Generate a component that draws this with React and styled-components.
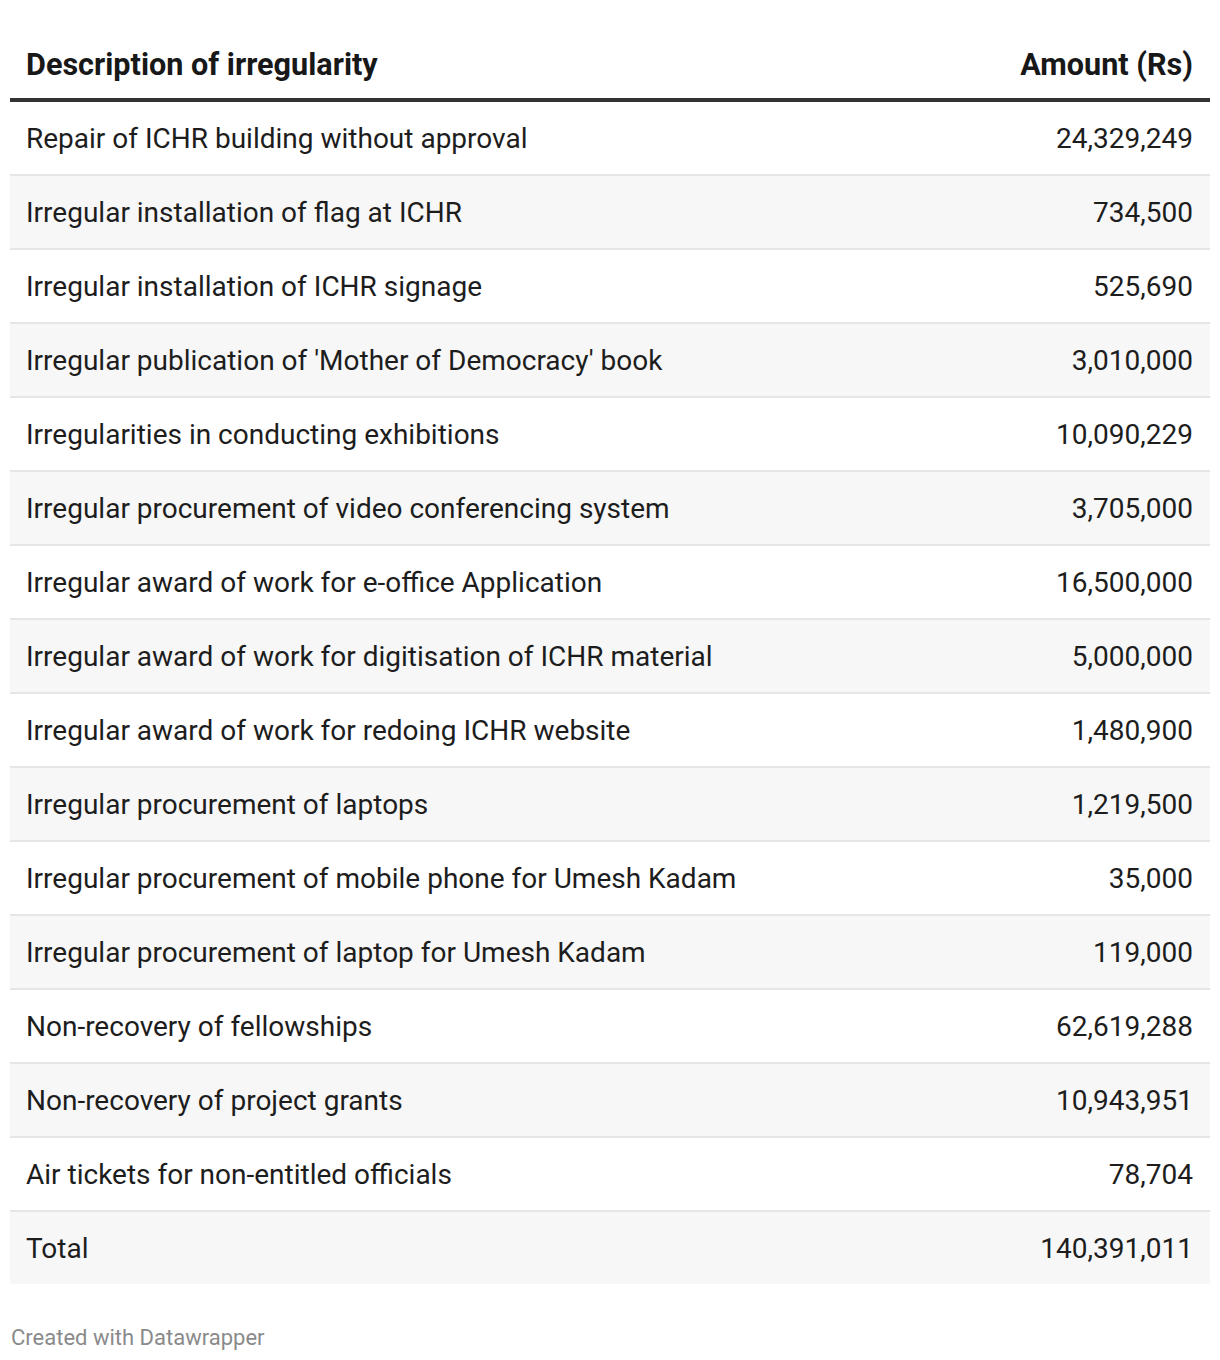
import React from "react";
import styled, { createGlobalStyle } from "styled-components";

const ROWS = [
  ["Repair of ICHR building without approval", "24,329,249"],
  ["Irregular installation of flag at ICHR", "734,500"],
  ["Irregular installation of ICHR signage", "525,690"],
  ["Irregular publication of 'Mother of Democracy' book", "3,010,000"],
  ["Irregularities in conducting exhibitions", "10,090,229"],
  ["Irregular procurement of video conferencing system", "3,705,000"],
  ["Irregular award of work for e-office Application", "16,500,000"],
  ["Irregular award of work for digitisation of ICHR material", "5,000,000"],
  ["Irregular award of work for redoing ICHR website", "1,480,900"],
  ["Irregular procurement of laptops", "1,219,500"],
  ["Irregular procurement of mobile phone for Umesh Kadam", "35,000"],
  ["Irregular procurement of laptop for Umesh Kadam", "119,000"],
  ["Non-recovery of fellowships", "62,619,288"],
  ["Non-recovery of project grants", "10,943,951"],
  ["Air tickets for non-entitled officials", "78,704"],
  ["Total", "140,391,011"],
];

function App() {
  return (
    <>
      <GlobalStyle />
      <Page>
        <Table>
          <thead>
            <tr>
              <HeadCell>Description of irregularity</HeadCell>
              <HeadCell align="right">Amount (Rs)</HeadCell>
            </tr>
          </thead>
          <tbody>
            {ROWS.map(([desc, amount], idx) => (
              <Row key={desc} $striped={idx % 2 === 1}>
                <Cell>{desc}</Cell>
                <Cell align="right">{amount}</Cell>
              </Row>
            ))}
          </tbody>
        </Table>
        <Footer>Created with Datawrapper</Footer>
      </Page>
    </>
  );
}

export default App;

//style
const GlobalStyle = createGlobalStyle`
  body {
    margin: 0;
    background: #fff;
    font-family: Roboto, "Liberation Sans", sans-serif;
    color: #1d1d1d;
  }
`;

const Page = styled.div`
  width: 1200px;
  padding: 30px 10px 0;
`;

const Table = styled.table`
  width: 100%;
  border-collapse: separate;
  border-spacing: 0;
`;

const HeadCell = styled.th`
  height: 72px;
  padding: 0 17px 0 16px;
  box-sizing: border-box;
  font-size: 30.6px;
  font-weight: 700;
  text-align: ${({ align }) => align || "left"};
  vertical-align: middle;
  border-bottom: 4px solid #333;
  color: #181818;
`;

const Row = styled.tr`
  background: ${({ $striped }) => ($striped ? "#f7f7f7" : "#fff")};
`;

const Cell = styled.td`
  height: 74px;
  padding: 0 17px 0 16px;
  box-sizing: border-box;
  font-size: 28px;
  text-align: ${({ align }) => align || "left"};
  vertical-align: middle;
  border-bottom: 2px solid #e6e6e6;

  ${Row}:last-child & {
    height: 72px;
    border-bottom: none;
  }
`;

const Footer = styled.div`
  margin-top: 41px;
  padding-left: 1px;
  font-size: 22px;
  color: #8a8a8a;
`;
